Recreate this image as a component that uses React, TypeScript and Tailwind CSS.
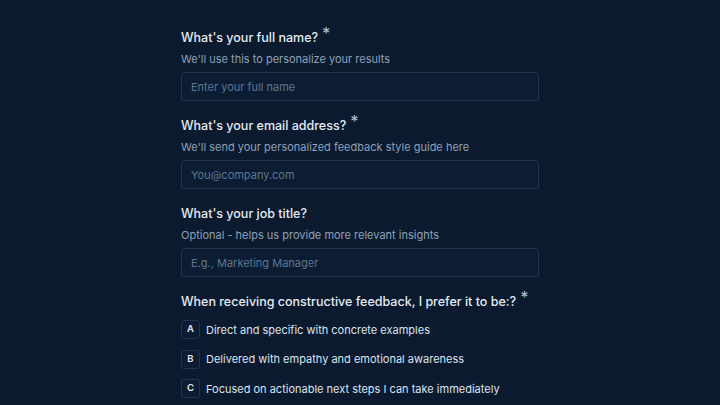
import { useState } from 'react';

type Field = {
    id: string;
    label: string;
    hint: string;
    placeholder: string;
    required?: boolean;
};

const fields: Field[] = [
    { id: 'name', label: "What's your full name?", hint: "We'll use this to personalize your results", placeholder: 'Enter your full name', required: true },
    { id: 'email', label: "What's your email address?", hint: "We'll send your personalized feedback style guide here", placeholder: 'You@company.com', required: true },
    { id: 'title', label: "What's your job title?", hint: 'Optional - helps us provide more relevant insights', placeholder: 'E.g., Marketing Manager' },
];

const options = [
    { key: 'A', text: 'Direct and specific with concrete examples' },
    { key: 'B', text: 'Delivered with empathy and emotional awareness' },
    { key: 'C', text: 'Focused on actionable next steps I can take immediately' },
];

const Required = () => (
    <span className="ml-[4px] relative -top-[3px] text-[16px] leading-none text-[#a9bccf]">*</span>
);

const App = () => {
    const [values, setValues] = useState<Record<string, string>>({});
    const [choice, setChoice] = useState<string | null>(null);

    return (
        <div
            className="min-h-[405px] w-full bg-[#0b1a2e] overflow-hidden"
            style={{ fontFamily: 'Inter, "Noto Sans", sans-serif' }}
        >
            <div className="w-[358px] ml-[181px] pt-[28px] flex flex-col gap-[15px]">
                {fields.map((f) => (
                    <div key={f.id} className="flex flex-col">
                        <label className="text-[12.5px] leading-5 font-medium text-[#e3eaf2]">
                            {f.label}
                            {f.required && <Required />}
                        </label>
                        <p className="mt-[3px] text-[11px] leading-[17px] text-[#8da2b8]">{f.hint}</p>
                        <input
                            value={values[f.id] ?? ''}
                            onChange={(e) => setValues({ ...values, [f.id]: e.target.value })}
                            placeholder={f.placeholder}
                            className="mt-[4px] h-[29px] w-full rounded-[3px] border border-[#1d3550] bg-[#0c1d33] px-[9px] text-[11px] text-[#e3eaf2] placeholder:text-[#5e7591] outline-none"
                        />
                    </div>
                ))}

                <div className="flex flex-col">
                    <h2 className="text-[12.5px] leading-5 font-medium text-[#e3eaf2]">
                        When receiving constructive feedback, I prefer it to be:?
                        <Required />
                    </h2>
                    <div className="mt-[8px] flex flex-col gap-[10.5px]">
                        {options.map((o) => (
                            <button
                                key={o.key}
                                onClick={() => setChoice(o.key)}
                                className="flex items-center gap-[6px] text-left"
                            >
                                <span
                                    className={
                                        'w-[19px] h-[19px] flex items-center justify-center rounded-[3px] border text-[9.5px] font-semibold ' +
                                        (choice === o.key
                                            ? 'border-[#4a8fd6] bg-[#15345a] text-white'
                                            : 'border-[#1d3550] bg-[#0c1d33] text-[#e3eaf2]')
                                    }
                                >
                                    {o.key}
                                </span>
                                <span className="text-[11px] leading-[18px] text-[#dbe4ee]">{o.text}</span>
                            </button>
                        ))}
                    </div>
                </div>
            </div>
        </div>
    );
};

export default App;
